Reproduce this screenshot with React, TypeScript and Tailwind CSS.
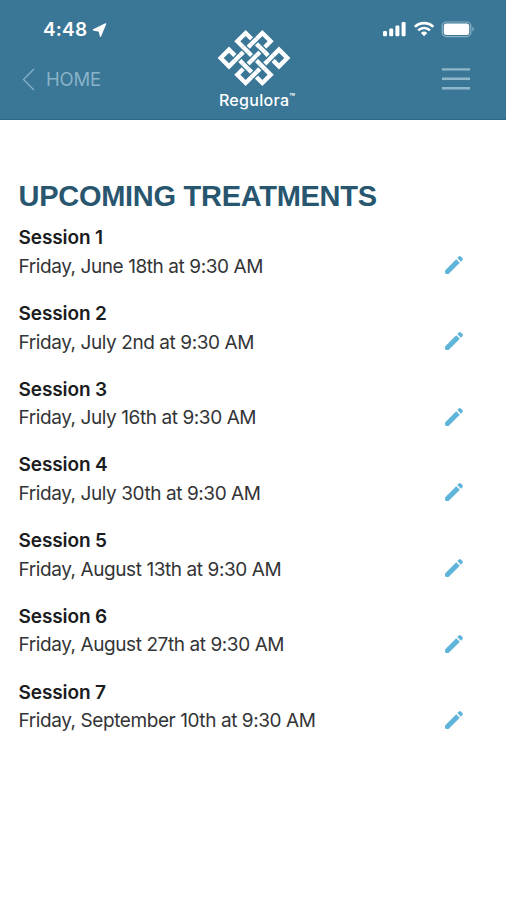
import { FunctionComponent } from "react";

type Session = {
  title: string;
  date: string;
};

const sessions: Session[] = [
  { title: "Session 1", date: "Friday, June 18th at 9:30 AM" },
  { title: "Session 2", date: "Friday, July 2nd at 9:30 AM" },
  { title: "Session 3", date: "Friday, July 16th at 9:30 AM" },
  { title: "Session 4", date: "Friday, July 30th at 9:30 AM" },
  { title: "Session 5", date: "Friday, August 13th at 9:30 AM" },
  { title: "Session 6", date: "Friday, August 27th at 9:30 AM" },
  { title: "Session 7", date: "Friday, September 10th at 9:30 AM" },
];

// the nine places where the two diagonals of the knot cross
const crossings = [-1, 0, 1].flatMap((u) => [-1, 0, 1].map((v) => ({ u, v })));

const KnotLogo: FunctionComponent = () => (
  <svg width="74" height="58" viewBox="-111 -87 222 174" fill="none">
    <path
      d="M-25-75 75 25 100 0 75-25-25 75-50 50 50-50 25-75-75 25-100 0-75-25 25 75 50 50-50-50Z"
      stroke="#fff"
      strokeWidth="13"
    />
    {crossings.map(({ u, v }) => {
      const x = (u + v) * 25;
      const y = (u - v) * 25;
      // strands alternate over and under
      const dy = (u + v) % 2 === 0 ? -1 : 1;
      const d = `M${x - 8} ${y - 8 * dy}L${x + 8} ${y + 8 * dy}`;
      return (
        <g key={`${u}-${v}`}>
          <path d={d} stroke="#3a7696" strokeWidth="21" />
          <path d={d} stroke="#fff" strokeWidth="13" />
        </g>
      );
    })}
  </svg>
);

const StatusIcons: FunctionComponent = () => (
  <svg width="94" height="18" viewBox="0 0 94 18" fill="#fff">
    <rect x="1" y="11" width="4" height="5.3" rx="1.2" />
    <rect x="7.2" y="8.5" width="4" height="7.8" rx="1.2" />
    <rect x="13.4" y="5.5" width="4" height="10.8" rx="1.2" />
    <rect x="19.6" y="2" width="4" height="14.3" rx="1.2" />
    <g fill="none" stroke="#fff" strokeWidth="2.7">
      <path d="M32.9 6.9a13 13 0 0 1 18.4 0" />
      <path d="M36.2 10.4a8.4 8.4 0 0 1 11.8 0" />
    </g>
    <path d="M38.9 12.9a4.7 4.7 0 0 1 6.4 0l-3.2 3.3Z" />
    <rect
      x="60.2"
      y="2"
      width="28.6"
      height="14.6"
      rx="4"
      fill="none"
      stroke="#8bb2c5"
      strokeWidth="1.2"
    />
    <rect x="61.8" y="3.6" width="25.4" height="11.4" rx="2.5" />
    <path d="M90.4 7c2 .6 2 3.8 0 4.4Z" fill="#8bb2c5" />
  </svg>
);

const Header: FunctionComponent = () => (
  <header className="mr-px grid h-[120px] grid-cols-3 border-b border-[#2f6784] bg-[#3a7696]">
    <div className="pt-[18px]">
      <div className="flex h-6 items-center gap-[5px] pl-[43px] text-[19px] font-semibold text-white">
        <span className="tracking-[0.2px]">4:48</span>
        <svg width="15" height="15" viewBox="0 0 15 15" fill="#fff">
          <path
            d="M13.6.9 1.4 6.9l5.8 1.2 1.3 5.2Z"
            stroke="#fff"
            strokeWidth="1.2"
            strokeLinejoin="round"
          />
        </svg>
      </div>
      <button className="mt-[25px] flex h-6 items-center gap-[11px] pl-[22px] text-[18.5px] text-[#88b2c8]">
        <svg width="13" height="23" viewBox="0 0 13 23" fill="none">
          <path d="M12 1 1.5 11.5 12 22" stroke="#88b2c8" strokeWidth="1.3" />
        </svg>
        <span className="pt-px tracking-[-0.2px]">HOME</span>
      </button>
    </div>
    <div className="flex flex-col items-center pt-[29px] pl-[3px] text-white">
      <KnotLogo />
      <div className="mt-[3px] flex h-5 items-start pl-[5px] leading-5">
        <span className="text-[16px] font-medium tracking-[0.3px]">
          Regulora
        </span>
        <span className="text-[9px] leading-[13px] font-bold">™</span>
      </div>
    </div>
    <div className="flex flex-col items-end pt-5">
      <div className="pr-[30px]">
        <StatusIcons />
      </div>
      <button className="mt-[30px] mr-[36px]">
        <svg width="28" height="22" viewBox="0 0 28 22">
          <path
            d="M0 1.4h28M0 10.8h28M0 20.3h28"
            stroke="#8fb8cc"
            strokeWidth="2.4"
          />
        </svg>
      </button>
    </div>
  </header>
);

const SessionRow: FunctionComponent<Session> = ({ title, date }) => (
  <li className="flex h-[75.7px] justify-between">
    <div className="text-[19px] leading-[28.5px] text-[#333436]">
      <p className="font-semibold tracking-[-0.1px] text-[#1b1c1e]">{title}</p>
      <p className="tracking-[-0.42px]">{date}</p>
    </div>
    <button className="mt-[31px] mr-[43px] h-5">
      <svg width="20" height="20" viewBox="0 0 20 20" fill="#5fb4da">
        <path d="M1 17.6v-2.2L12.2 4.2l3.6 3.6L4.6 19H2.4C1.6 19 1 18.4 1 17.6Z" />
        <path d="m13.3 3.1 1.5-1.5c.7-.7 1.5-.7 2.1 0l1.5 1.5c.7.7.7 1.5 0 2.1l-1.5 1.5Z" />
      </svg>
    </button>
  </li>
);

export default function App() {
  return (
    <div className="h-[900px] w-[507px] overflow-hidden bg-white font-[Inter,sans-serif]">
      <Header />
      <main className="pt-[58px] pl-[18.5px]">
        <h1 className="font-['Liberation_Sans',sans-serif] text-[29px] leading-9 font-bold tracking-[-0.28px] whitespace-nowrap text-[#28566f]">
          UPCOMING TREATMENTS
        </h1>
        <ul className="mt-[10.4px]">
          {sessions.map((session) => (
            <SessionRow key={session.title} {...session} />
          ))}
        </ul>
      </main>
    </div>
  );
}
